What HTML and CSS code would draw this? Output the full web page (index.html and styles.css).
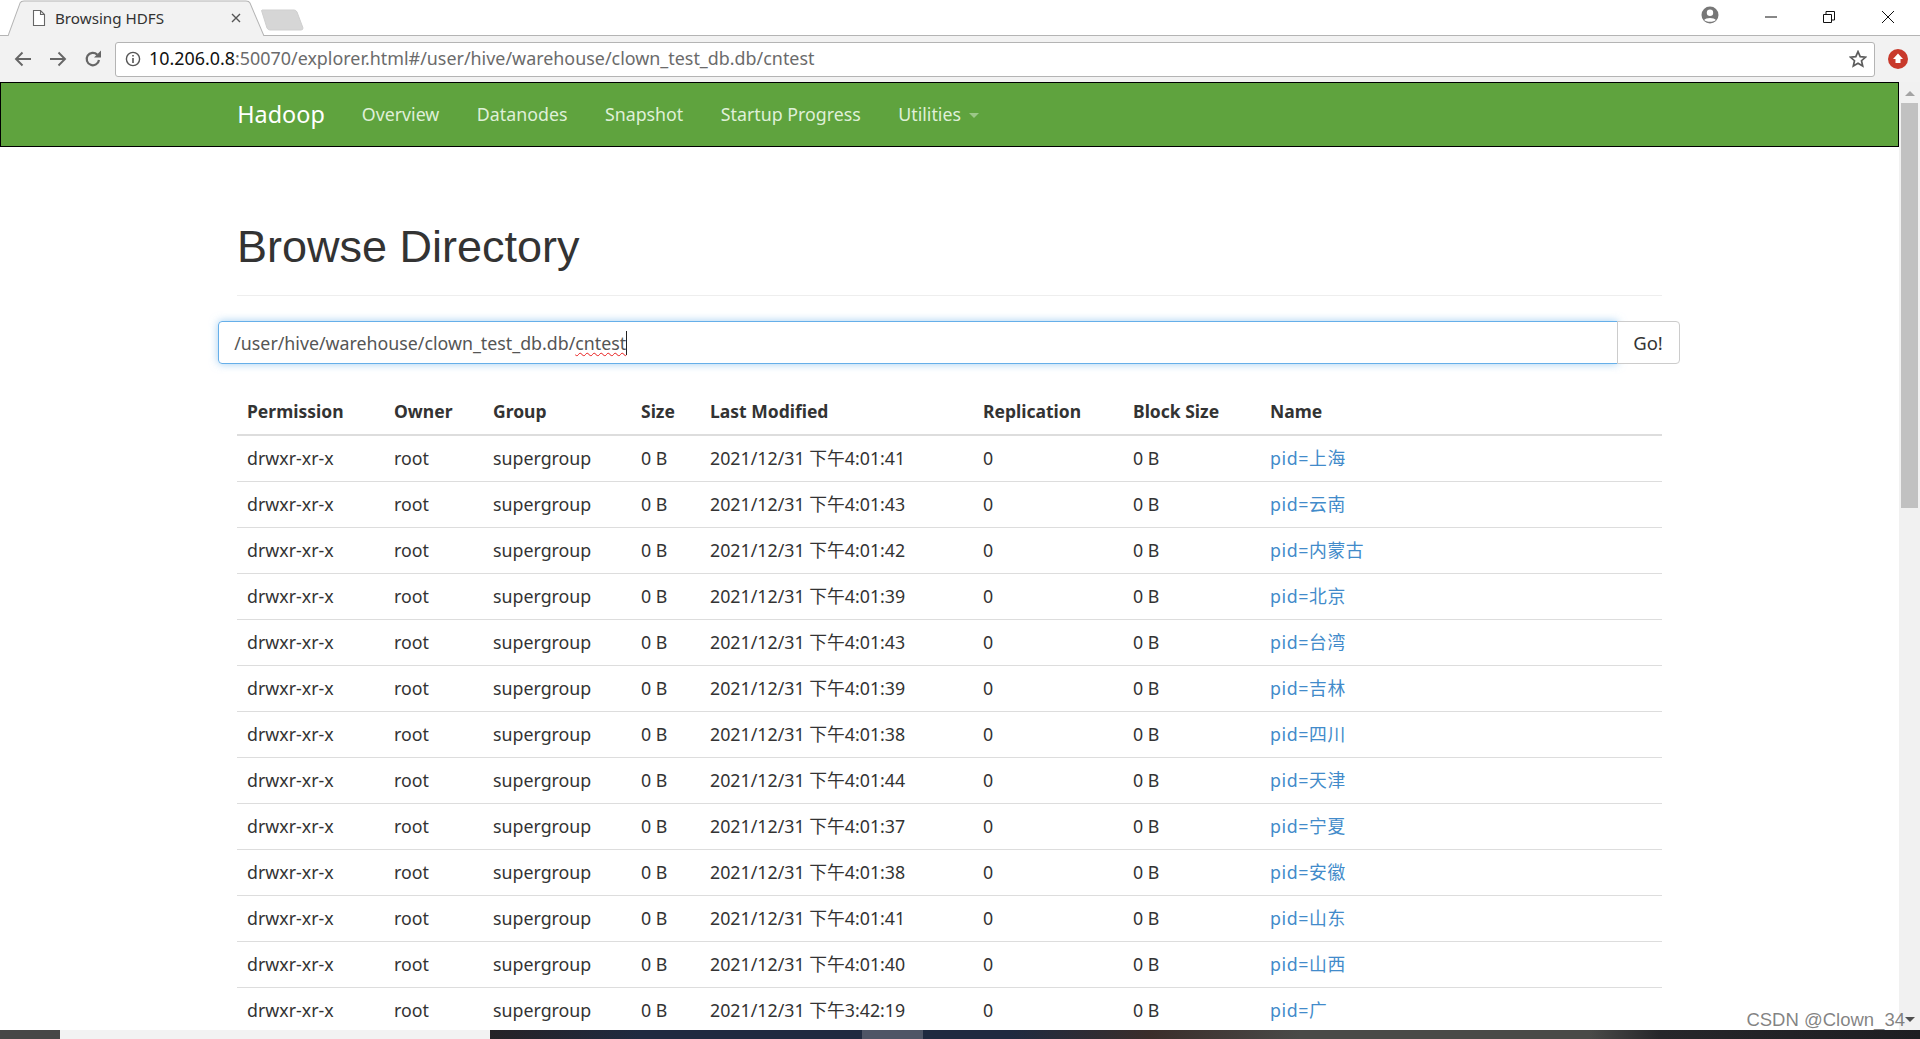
FILE: index.html
```html
<!DOCTYPE html>
<html lang="zh-CN">
<head>
<meta charset="utf-8">
<title>Browsing HDFS</title>
<link rel="stylesheet" href="styles.css">
</head>
<body>
<div class="browser">
  <header class="tabstrip">
    <div class="tab">
      <svg class="tab-shape" viewBox="0 0 257 35" preserveAspectRatio="none"><path d="M0 35 12 3Q13 1 16 1H238Q241 1 242 3L256 35" fill="#f2f2f2" stroke="#b4b4b4"/></svg>
      <svg class="tab-icon" viewBox="0 0 14 18" width="14" height="18"><path d="M1.5 1.5H8.5L12.5 5.5V16.5H1.5ZM8.5 1.5V5.5H12.5" fill="#fff" stroke="#666" stroke-width="1.1"/></svg>
      <span class="tab-title">Browsing HDFS</span>
      <svg class="tab-close" viewBox="0 0 10 10" width="10" height="10"><path d="M1 1 9 9M9 1 1 9" stroke="#555" stroke-width="1.4"/></svg>
    </div>
    <svg class="newtab" viewBox="0 0 43 22" width="43" height="22"><path d="M1 1H33Q35 1 36 3L42 19Q42 21 40 21H9Q7 21 6 19L1 3Q0 1 1 1Z" fill="#d6d6d6" stroke="#cfcfcf"/></svg>
    <div class="window-controls">
      <svg class="profile" viewBox="0 0 18 18" width="18" height="18"><circle cx="9" cy="9" r="8.5" fill="#777"/><circle cx="9" cy="6.8" r="3.2" fill="#fff"/><path d="M3.2 14C4.5 11.2 13.5 11.2 14.8 14 13 16.4 5 16.4 3.2 14Z" fill="#fff"/></svg>
      <svg class="ctl" viewBox="0 0 14 14" width="14" height="14"><path d="M1 7H13" stroke="#111" stroke-width="1"/></svg>
      <svg class="ctl" viewBox="0 0 14 14" width="14" height="14"><path d="M1.5 4.5H9.5V12.5H1.5ZM4 4.5V1.5H12.5V10H9.5" fill="none" stroke="#111" stroke-width="1"/></svg>
      <svg class="ctl" viewBox="0 0 14 14" width="14" height="14"><path d="M1 1 13 13M13 1 1 13" stroke="#111" stroke-width="1"/></svg>
    </div>
  </header>

  <div class="toolbar">
    <svg class="nav-btn" viewBox="0 0 18 18" width="18" height="18"><path d="M17 9H2M8.5 2.5 2 9 8.5 15.5" fill="none" stroke="#666" stroke-width="1.9"/></svg>
    <svg class="nav-btn" viewBox="0 0 18 18" width="18" height="18"><path d="M1 9H16M9.5 2.5 16 9 9.5 15.5" fill="none" stroke="#666" stroke-width="1.9"/></svg>
    <svg class="nav-btn" viewBox="0 0 18 18" width="18" height="18"><path d="M15 10A6.2 6.2 0 1 1 13.2 4.6" fill="none" stroke="#666" stroke-width="2.2"/><path d="M10 7.5H17V.5Z" fill="#666"/></svg>
    <div class="omnibox">
      <svg class="info" viewBox="0 0 16 16" width="16" height="16"><circle cx="8" cy="8" r="6.6" fill="none" stroke="#555" stroke-width="1.4"/><path d="M8 7V12M8 4V5.6" stroke="#555" stroke-width="1.6"/></svg>
      <span class="url"><span class="url-host">10.206.0.8</span>:50070/explorer.html#/user/hive/warehouse/clown_test_db.db/cntest</span>
      <svg class="star" viewBox="0 0 18 18" width="18" height="18"><path d="M9 1.6 11.2 6.6 16.6 7.1 12.5 10.7 13.7 16 9 13.2 4.3 16 5.5 10.7 1.4 7.1 6.8 6.6Z" fill="none" stroke="#5c5c5c" stroke-width="1.7"/></svg>
    </div>
    <svg class="ext" viewBox="0 0 20 20" width="20" height="20"><circle cx="10" cy="10" r="10" fill="#c8392b"/><path d="M10 4.5 15 10H12.5V14H7.5V10H5Z" fill="#fff"/></svg>
  </div>

  <div class="viewport">
    <main class="page">
      <nav class="navbar">
        <div class="nav-inner">
          <a class="brand">Hadoop</a>
          <a class="nav-link">Overview</a>
          <a class="nav-link">Datanodes</a>
          <a class="nav-link">Snapshot</a>
          <a class="nav-link">Startup Progress</a>
          <a class="nav-link">Utilities <span class="caret"></span></a>
        </div>
      </nav>
      <div class="container">
        <div class="page-header"><h1>Browse Directory</h1></div>
        <div class="input-group">
          <div class="path-input">/user/hive/warehouse/clown_test_db.db/<span class="misspelt">cntest</span><span class="cursor"></span></div>
          <div class="go-btn">Go!</div>
        </div>
        <table class="listing">
          <thead>
            <tr><th class="c1">Permission</th><th class="c2">Owner</th><th class="c3">Group</th><th class="c4">Size</th><th class="c5">Last Modified</th><th class="c6">Replication</th><th class="c7">Block Size</th><th class="c8">Name</th></tr>
          </thead>
          <tbody>
            <tr><td>drwxr-xr-x</td><td>root</td><td>supergroup</td><td>0 B</td><td>2021/12/31 下午4:01:41</td><td>0</td><td>0 B</td><td><a>pid=上海</a></td></tr>
            <tr><td>drwxr-xr-x</td><td>root</td><td>supergroup</td><td>0 B</td><td>2021/12/31 下午4:01:43</td><td>0</td><td>0 B</td><td><a>pid=云南</a></td></tr>
            <tr><td>drwxr-xr-x</td><td>root</td><td>supergroup</td><td>0 B</td><td>2021/12/31 下午4:01:42</td><td>0</td><td>0 B</td><td><a>pid=内蒙古</a></td></tr>
            <tr><td>drwxr-xr-x</td><td>root</td><td>supergroup</td><td>0 B</td><td>2021/12/31 下午4:01:39</td><td>0</td><td>0 B</td><td><a>pid=北京</a></td></tr>
            <tr><td>drwxr-xr-x</td><td>root</td><td>supergroup</td><td>0 B</td><td>2021/12/31 下午4:01:43</td><td>0</td><td>0 B</td><td><a>pid=台湾</a></td></tr>
            <tr><td>drwxr-xr-x</td><td>root</td><td>supergroup</td><td>0 B</td><td>2021/12/31 下午4:01:39</td><td>0</td><td>0 B</td><td><a>pid=吉林</a></td></tr>
            <tr><td>drwxr-xr-x</td><td>root</td><td>supergroup</td><td>0 B</td><td>2021/12/31 下午4:01:38</td><td>0</td><td>0 B</td><td><a>pid=四川</a></td></tr>
            <tr><td>drwxr-xr-x</td><td>root</td><td>supergroup</td><td>0 B</td><td>2021/12/31 下午4:01:44</td><td>0</td><td>0 B</td><td><a>pid=天津</a></td></tr>
            <tr><td>drwxr-xr-x</td><td>root</td><td>supergroup</td><td>0 B</td><td>2021/12/31 下午4:01:37</td><td>0</td><td>0 B</td><td><a>pid=宁夏</a></td></tr>
            <tr><td>drwxr-xr-x</td><td>root</td><td>supergroup</td><td>0 B</td><td>2021/12/31 下午4:01:38</td><td>0</td><td>0 B</td><td><a>pid=安徽</a></td></tr>
            <tr><td>drwxr-xr-x</td><td>root</td><td>supergroup</td><td>0 B</td><td>2021/12/31 下午4:01:41</td><td>0</td><td>0 B</td><td><a>pid=山东</a></td></tr>
            <tr><td>drwxr-xr-x</td><td>root</td><td>supergroup</td><td>0 B</td><td>2021/12/31 下午4:01:40</td><td>0</td><td>0 B</td><td><a>pid=山西</a></td></tr>
            <tr><td>drwxr-xr-x</td><td>root</td><td>supergroup</td><td>0 B</td><td>2021/12/31 下午3:42:19</td><td>0</td><td>0 B</td><td><a>pid=广</a></td></tr>
          </tbody>
        </table>
      </div>
    </main>
    <aside class="scrollbar">
      <span class="arrow-up"></span>
      <span class="thumb"></span>
      <span class="arrow-down"></span>
    </aside>
    <span class="watermark">CSDN @Clown_34</span>
  </div>
  <footer class="taskbar"></footer>
</div>
</body>
</html>
```

FILE: styles.css
```css
* { box-sizing: border-box; }
html, body { margin: 0; height: 100%; overflow: hidden; }
body {
  font-family: "Noto Sans", "Noto Sans CJK SC", sans-serif;
  font-size: 17.8px;
  color: #333;
  background: #fff;
}
.browser { display: flex; flex-direction: column; height: 1039px; }

/* tab strip */
.tabstrip {
  height: 36px;
  flex: none;
  display: flex;
  align-items: flex-start;
  background: #fff;
  border-bottom: 1px solid #b4b4b4;
  padding-left: 8px;
}
.tab {
  position: relative;
  width: 257px;
  height: 36px;
  display: flex;
  align-items: center;
  padding: 0 24px 0 24px;
  flex: none;
}
.tab-shape { position: absolute; left: 0; top: 0; width: 100%; height: 36px; }
.tab-icon, .tab-title, .tab-close { position: relative; }
.tab-icon { margin-right: 9px; }
.tab-title { flex: 1; font-size: 15.2px; color: #333; white-space: nowrap; }
.newtab { margin: 9px 0 0 -4px; flex: none; }
.window-controls {
  margin-left: auto;
  display: flex;
  align-items: center;
  height: 34px;
  padding-right: 25px;
}
.profile { margin-right: 45px; margin-top: -4px; }
.ctl { margin-left: 44px; }
.profile + .ctl { margin-left: 0; }
.ctl:last-child { margin-left: 45px; }

/* toolbar */
.toolbar {
  height: 46px;
  flex: none;
  display: flex;
  align-items: center;
  background: #f2f2f2;
  padding: 0 0 0 14px;
}
.nav-btn { margin-right: 17px; flex: none; }
.omnibox {
  width: 1760px;
  height: 35px;
  margin-left: -4px;
  background: #fff;
  border: 1px solid #b4b4b4;
  border-radius: 3px;
  display: flex;
  align-items: center;
  padding: 0 7px 0 9px;
}
.info { margin-right: 8px; flex: none; }
.url { flex: 1; font-size: 17.9px; color: #6b6b6b; white-space: nowrap; padding-bottom: 2px; }
.url-host { color: #111; }
.star { flex: none; }
.ext { margin-left: 13px; flex: none; }

/* viewport */
.viewport { position: relative; flex: 1; display: flex; min-height: 0; overflow: hidden; }
.page { flex: 1; min-width: 0; overflow: hidden; background: #fff; }
.navbar {
  height: 65px;
  background: #5fa33e;
  border: 1px solid #000;
}
.nav-inner {
  width: 1462.5px;
  height: 100%;
  margin: 0 auto;
  display: flex;
  align-items: center;
  padding: 0 0 2px 19px;
}
.brand { color: #fff; font-size: 23.4px; margin-right: 37px; }
.nav-link { color: #dff0d8; margin-right: 37.5px; white-space: nowrap; }
.caret {
  display: inline-block;
  width: 0;
  height: 0;
  margin-left: 3px;
  vertical-align: middle;
  border-top: 5px solid #9cc888;
  border-left: 5px solid transparent;
  border-right: 5px solid transparent;
}
.container { width: 1462.5px; margin: 0 auto; padding: 0 18.75px; }
.page-header { margin-top: 75px; padding-bottom: 24px; border-bottom: 1px solid #eee; }
h1 {
  margin: 0;
  font-family: "Liberation Sans", Arial, sans-serif;
  font-size: 45px;
  font-weight: 400;
  line-height: 49px;
  color: #333;
}
.input-group { display: flex; height: 43px; margin: 25px -17.5px 0 -18.75px; }
.path-input {
  flex: 1;
  display: flex;
  align-items: center;
  padding: 0 15px;
  border: 1px solid #66afe9;
  border-radius: 4px 0 0 4px;
  box-shadow: 0 0 8px rgba(102, 175, 233, .6);
  color: #555;
  white-space: nowrap;
}
.misspelt { text-decoration: underline wavy #e81c1c 1px; text-underline-offset: 2px; }
.cursor { width: 1px; height: 24px; background: #222; }
.go-btn {
  width: 63px;
  display: flex;
  align-items: center;
  justify-content: center;
  margin-left: -1px;
  border: 1px solid #ccc;
  border-radius: 0 4px 4px 0;
  background: #fff;
  color: #333;
  font-size: 18.5px;
}

/* table */
.listing { width: 100%; table-layout: fixed; border-collapse: collapse; margin-top: 25px; }
.listing th, .listing td { padding: 10px; line-height: 25px; text-align: left; white-space: nowrap; }
.listing th { font-size: 17.5px; font-weight: 700; border-bottom: 2px solid #ddd; }
.listing td { border-bottom: 1px solid #ddd; }
.listing a { color: #428bca; letter-spacing: .6px; }
.c1 { width: 147px; }
.c2 { width: 99px; }
.c3 { width: 148px; }
.c4 { width: 69px; }
.c5 { width: 273px; }
.c6 { width: 150px; }
.c7 { width: 137px; }

/* scrollbar */
.scrollbar {
  position: relative;
  width: 21px;
  flex: none;
  display: flex;
  flex-direction: column;
  align-items: center;
  background: #f1f1f1;
}
.arrow-up {
  margin-top: 9px;
  width: 0;
  height: 0;
  border-bottom: 5px solid #a3a3a3;
  border-left: 5px solid transparent;
  border-right: 5px solid transparent;
}
.thumb { width: 17px; height: 405px; margin-top: 7px; background: #c1c1c1; }
.arrow-down {
  margin-top: auto;
  margin-bottom: 8px;
  width: 0;
  height: 0;
  border-top: 5px solid #505050;
  border-left: 5px solid transparent;
  border-right: 5px solid transparent;
}
.watermark {
  position: absolute;
  right: 15px;
  bottom: -1px;
  font-family: "Liberation Sans", Arial, sans-serif;
  font-size: 18.5px;
  line-height: 22px;
  color: rgba(90, 90, 90, .75);
}

/* taskbar */
.taskbar {
  height: 9px;
  flex: none;
  background: linear-gradient(90deg,
    #474747 0 60px, #f2f2f2 60px 490px, #262226 490px, #1f2a40 640px 862px,
    #4e5566 862px 923px, #1f2a40 923px 1010px, #3a2d2a 1150px, #4a4a48 1300px 1590px,
    #26262a 1660px, #1e1e22 1920px);
}
```
